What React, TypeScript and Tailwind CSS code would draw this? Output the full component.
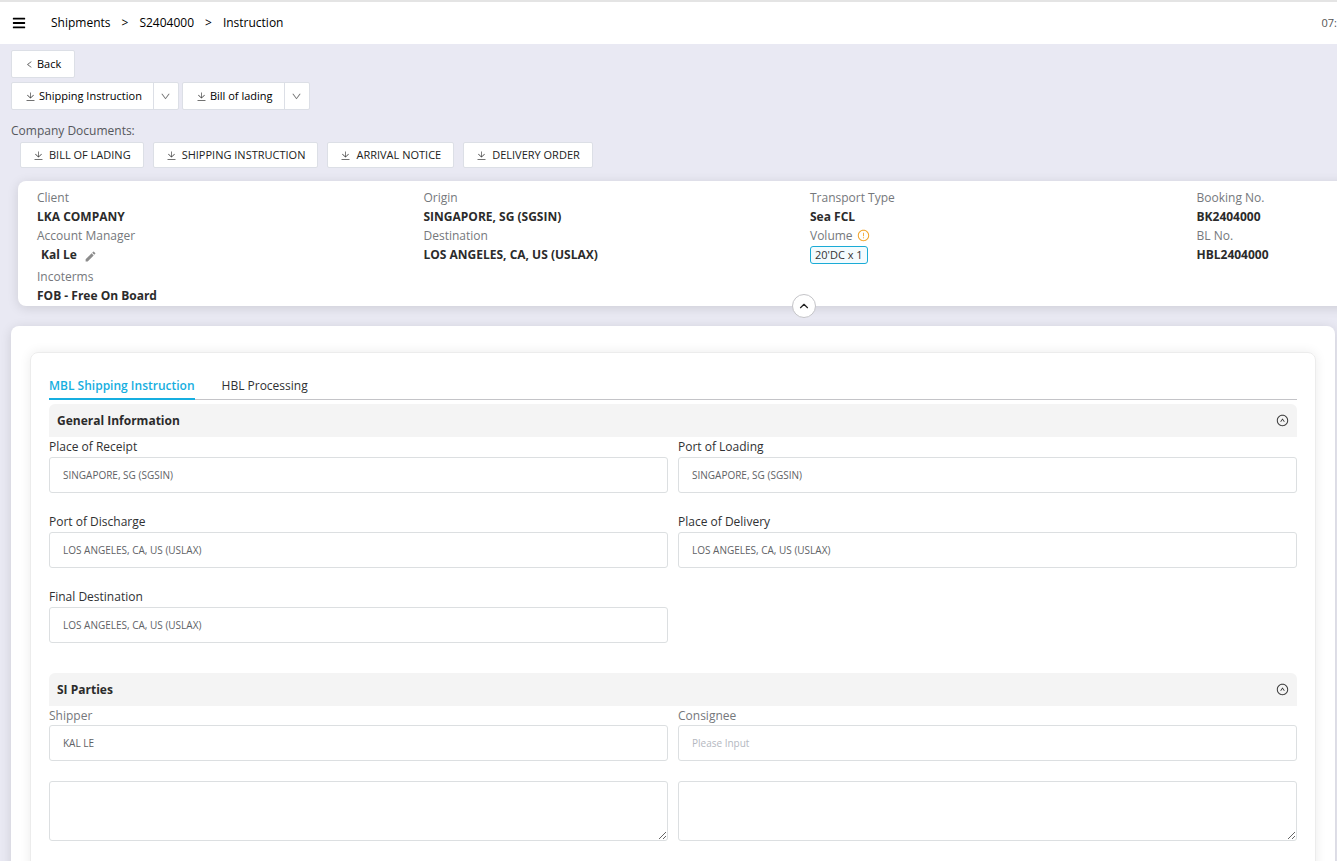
import React, { useState } from "react"
import { FaBars } from "react-icons/fa";
import { MdEdit } from "react-icons/md";
import { AiOutlineDown, AiOutlineExclamationCircle, AiOutlineLeft, AiOutlineUpCircle } from "react-icons/ai";
import { ChevronUp } from "lucide-react";

const companyDocuments = ["BILL OF LADING", "SHIPPING INSTRUCTION", "ARRIVAL NOTICE", "DELIVERY ORDER"]

const places = [
    { id: "receipt", name: "Place of Receipt", value: "SINGAPORE, SG (SGSIN)" },
    { id: "loading", name: "Port of Loading", value: "SINGAPORE, SG (SGSIN)" },
    { id: "discharge", name: "Port of Discharge", value: "LOS ANGELES, CA, US (USLAX)" },
    { id: "delivery", name: "Place of Delivery", value: "LOS ANGELES, CA, US (USLAX)" },
    { id: "final", name: "Final Destination", value: "LOS ANGELES, CA, US (USLAX)" },
]

const parties = [
    { id: "shipper", name: "Shipper", value: "KAL LE" },
    { id: "consignee", name: "Consignee", value: "" },
]

function DownloadIcon() {
    return (
        <svg viewBox="0 0 1024 1024" className="size-[11px] shrink-0 fill-[#444]" aria-hidden="true">
            <path d="M160 832h704a32 32 0 1 1 0 64H160a32 32 0 1 1 0-64zm384-253.696 236.288-236.352 45.248 45.248L508.8 704 192 387.2l45.248-45.248L480 584.704V128h64v450.304z" />
        </svg>
    )
}

function SplitButton({ value }: { value: string }) {
    return (
        <div className="flex h-7 rounded-xs border border-[#dcdfe6] bg-white text-black">
            <button className="flex items-center gap-[3px] pl-[13px] pr-[11px] text-[11px]">
                <DownloadIcon />
                {value}
            </button>
            <button aria-label={`More ${value} options`} className="flex w-[25px] items-center justify-center border-l border-[#dcdfe6]">
                <AiOutlineDown className="size-[11px] text-[#777]" />
            </button>
        </div>
    )
}

function Info({ label, children }: { label: React.ReactNode, children: React.ReactNode }) {
    return (
        <div>
            <dt className="flex h-[19px] items-center gap-1 font-medium text-[#75787c]">{label}</dt>
            <dd className="flex h-[19px] items-center font-bold text-[#2b2b2b]">{children}</dd>
        </div>
    )
}

function Section({ title, children }: { title: string, children: React.ReactNode }) {
    const [open, setOpen] = useState(true)

    return (
        <section>
            <div className="flex h-[33px] items-center justify-between rounded-t-md bg-[#f4f4f4] px-2">
                <h2 className="font-bold text-[#2b2b2b]">{title}</h2>
                <button aria-label={`Toggle ${title}`} aria-expanded={open} onClick={() => setOpen(!open)}>
                    <AiOutlineUpCircle className="size-[13px] text-[#333]" />
                </button>
            </div>
            {open && children}
        </section>
    )
}

export default function App() {
    const [tab, setTab] = useState("mbl")

    return (
        <div className="min-h-screen overflow-hidden bg-[#e9e9f3] font-['Open_Sans','Noto_Sans',sans-serif] text-[12px] leading-[18px] text-[#303133]">
            {/* HEADER */}
            <header className="flex h-11 items-center justify-between border-t-2 border-[#e4e4e4] bg-white">
                <div className="flex items-center">
                    <button aria-label="Menu" className="ml-3 mr-[25px] text-black">
                        <FaBars className="size-[14px]" />
                    </button>
                    <nav aria-label="Breadcrumb" className="flex gap-[11px] text-black">
                        <a href="#shipments">Shipments</a>
                        <span>&gt;</span>
                        <a href="#shipment">S2404000</a>
                        <span>&gt;</span>
                        <a href="#instruction">Instruction</a>
                    </nav>
                </div>
                <span className="text-[11px] text-[#555]">07:</span>
            </header>

            {/* ACTIONS */}
            <div className="px-[11px] pt-[6px]">
                <button className="flex h-7 items-center gap-[3px] rounded-xs border border-[#dcdfe6] bg-white px-[13px] text-[11px] text-black">
                    <AiOutlineLeft className="size-[9px] text-[#555]" />
                    Back
                </button>
                <div className="mt-1 flex gap-[3px]">
                    <SplitButton value="Shipping Instruction" />
                    <SplitButton value="Bill of lading" />
                </div>
                <p className="mt-3 text-[#55575c]">Company Documents:</p>
                <div className="mt-[2px] flex gap-[9px] pl-[9px]">
                    {companyDocuments.map((name) => (
                        <button key={name} className="flex h-[26px] items-center gap-[5px] rounded-xs border border-[#dcdfe6] bg-white px-3 text-[11px] text-[#222]">
                            <DownloadIcon />
                            {name}
                        </button>
                    ))}
                </div>
            </div>

            {/* SUMMARY, runs past the right edge of the window */}
            <div className="relative ml-[18px] mr-[-253px] mt-[13px] rounded-lg bg-white shadow-[0_2px_12px_rgba(0,0,0,0.12)]">
                <dl className="grid h-[125px] grid-cols-4 pl-[19px] pr-[7px] pt-[7px]">
                    <div>
                        <Info label="Client">LKA COMPANY</Info>
                        <Info label="Account Manager">
                            <span className="pl-1">Kal Le</span>
                            <button aria-label="Edit account manager" className="ml-[7px] pt-1">
                                <MdEdit className="size-[13px] text-[#8c8c8c]" />
                            </button>
                        </Info>
                        <div className="pt-[3px]">
                            <Info label="Incoterms">FOB - Free On Board</Info>
                        </div>
                    </div>
                    <div>
                        <Info label="Origin">SINGAPORE, SG (SGSIN)</Info>
                        <Info label="Destination">LOS ANGELES, CA, US (USLAX)</Info>
                    </div>
                    <div>
                        <Info label="Transport Type">Sea FCL</Info>
                        <Info label={<>Volume <AiOutlineExclamationCircle className="size-[13px] text-[#f0a020]" /></>}>
                            <span className="flex h-[18px] items-center rounded-[3px] border border-[#1aabd6] bg-[#f3fbfe] px-1 text-[11px] font-normal text-[#333]">20'DC x 1</span>
                        </Info>
                    </div>
                    <div>
                        <Info label="Booking No.">BK2404000</Info>
                        <Info label="BL No.">HBL2404000</Info>
                    </div>
                </dl>
                <button aria-label="Collapse summary" className="absolute -bottom-3 left-1/2 flex size-6 -translate-x-1/2 items-center justify-center rounded-full border border-[#c4c4c8] bg-white">
                    <ChevronUp className="size-[14px] text-[#222]" />
                </button>
            </div>

            {/* INSTRUCTION */}
            <main className="ml-[11px] mr-[2px] mt-5 rounded-lg bg-white px-[19px] pt-[26px] shadow-[0_2px_12px_rgba(0,0,0,0.12)]">
                <div className="rounded-lg border border-[#ececec] px-[18px] pb-10 pt-[19px] shadow-[0_0_12px_rgba(0,0,0,0.08)]">
                    <div role="tablist" className="flex gap-[27px] border-b border-[#c4c4c8]">
                        <button
                            role="tab"
                            aria-selected={tab === "mbl"}
                            onClick={() => setTab("mbl")}
                            className="-mb-px flex h-7 items-center border-b-2 border-[#16aee0] pt-[2px] font-semibold text-[#16aee0]"
                        >
                            MBL Shipping Instruction
                        </button>
                        <button role="tab" aria-selected={tab === "hbl"} onClick={() => setTab("hbl")} className="-mb-px flex h-7 items-center border-b-2 border-transparent pt-[2px] font-medium">
                            HBL Processing
                        </button>
                    </div>

                    <div className="flex flex-col gap-[30px] pt-1">
                        <Section title="General Information">
                            <div className="grid grid-cols-2 gap-x-[10px] gap-y-[19px]">
                                {places.map((place) => (
                                    <div key={place.id}>
                                        <label htmlFor={place.id} className="flex h-5 items-center font-medium">{place.name}</label>
                                        <input id={place.id} type="text" defaultValue={place.value} className="block h-9 w-full rounded-[3px] border border-[#dcdfe1] px-[13px] text-[10px] text-[#606266]" />
                                    </div>
                                ))}
                            </div>
                        </Section>
                        <Section title="SI Parties">
                            <div className="grid grid-cols-2 gap-x-[10px]">
                                {parties.map((party) => (
                                    <div key={party.id}>
                                        <label htmlFor={party.id} className="flex h-[19px] items-center font-medium text-[#75787c]">{party.name}</label>
                                        <input id={party.id} type="text" defaultValue={party.value} placeholder="Please Input" className="block h-9 w-full rounded-[3px] border border-[#dcdfe1] px-[13px] text-[10px] text-[#606266] placeholder:text-[#b4b8bf]" />
                                        <textarea aria-label={`${party.name} details`} className="mt-5 block h-[60px] w-full resize-y rounded-[3px] border border-[#dcdfe1] px-[13px] py-2 text-[10px] text-[#606266]" />
                                    </div>
                                ))}
                            </div>
                        </Section>
                    </div>
                </div>
            </main>
        </div>
    );
}
